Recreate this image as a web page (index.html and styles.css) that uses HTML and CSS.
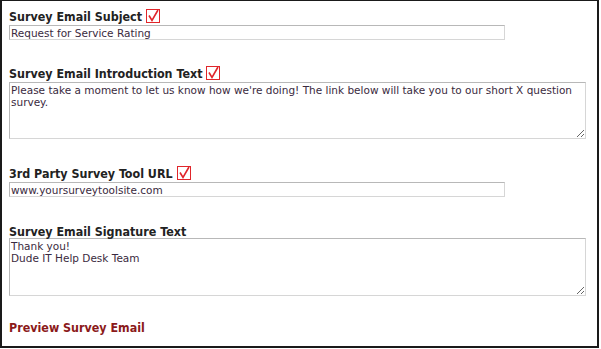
FILE: index.html
```html
<!DOCTYPE html>
<html lang="en">
<head>
    <meta charset="UTF-8">
    <title>Survey Email Settings</title>
    <link rel="stylesheet" href="styles.css">
</head>
<body>
    <div class="panel">
        <div class="field">
            <label class="field-label">Survey Email Subject
                <svg class="req" width="14" height="14" viewBox="0 0 14 14"><rect x="0.5" y="0.5" width="13" height="13" fill="none" stroke="#e0262b"/><path d="M3 6.5 L6 11.5 L12 1" fill="none" stroke="#e0262b" stroke-width="1.6"/></svg>
            </label>
            <input class="text-input" type="text" value="Request for Service Rating">
        </div>

        <div class="field">
            <label class="field-label">Survey Email Introduction Text
                <svg class="req" width="14" height="14" viewBox="0 0 14 14"><rect x="0.5" y="0.5" width="13" height="13" fill="none" stroke="#e0262b"/><path d="M3 6.5 L6 11.5 L12 1" fill="none" stroke="#e0262b" stroke-width="1.6"/></svg>
            </label>
            <textarea class="text-area intro">Please take a moment to let us know how we're doing! The link below will take you to our short X question survey.</textarea>
        </div>

        <div class="field">
            <label class="field-label">3rd Party Survey Tool URL
                <svg class="req" width="14" height="14" viewBox="0 0 14 14"><rect x="0.5" y="0.5" width="13" height="13" fill="none" stroke="#e0262b"/><path d="M3 6.5 L6 11.5 L12 1" fill="none" stroke="#e0262b" stroke-width="1.6"/></svg>
            </label>
            <input class="text-input" type="text" value="www.yoursurveytoolsite.com">
        </div>

        <div class="field">
            <label class="field-label">Survey Email Signature Text</label>
            <textarea class="text-area sig">Thank you!
Dude IT Help Desk Team</textarea>
        </div>

        <a class="preview-link" href="#">Preview Survey Email</a>
    </div>
</body>
</html>
```

FILE: styles.css
```css
body {
    margin: 0;
    padding: 0;
    background: #fff;
    font-family: "DejaVu Sans Condensed", "DejaVu Sans", sans-serif;
}
.panel {
    width: 599px;
    height: 348px;
    box-sizing: border-box;
    border-style: solid;
    border-color: #1a1a1a;
    border-width: 1px 2px 2px 2px;
    padding: 6px 0 0 7px;
}
.field {
    margin-bottom: 25px;
}
.field-label {
    display: flex;
    align-items: center;
    gap: 4px;
    font-size: 12.4px;
    font-weight: bold;
    color: #222;
    height: 18px;
}
.req {
    display: block;
    margin-top: -1px;
}
.text-input, .text-area {
    display: block;
    box-sizing: border-box;
    margin: 0;
    border: 1px solid #b8b8b8;
    border-right-color: #d6d6d6;
    border-bottom-color: #d6d6d6;
    font-family: "DejaVu Sans", sans-serif;
    font-size: 10.5px;
    color: #3a2a40;
    padding: 0 1px;
}
.text-input {
    width: 496px;
    height: 15px;
}
.text-area {
    width: 577px;
    height: 56px;
    line-height: 12px;
    padding: 1px 1px;
    resize: both;
}
.field:nth-child(2) {
    margin-top: -1px;
}
.text-area.intro {
    height: 57px;
}
.text-area.sig {
    height: 58px;
    margin-top: -2px;
}
.preview-link {
    display: block;
    font-size: 12.4px;
    font-weight: bold;
    color: #8b1a1a;
    text-decoration: none;
    margin-top: -1px;
}
```
